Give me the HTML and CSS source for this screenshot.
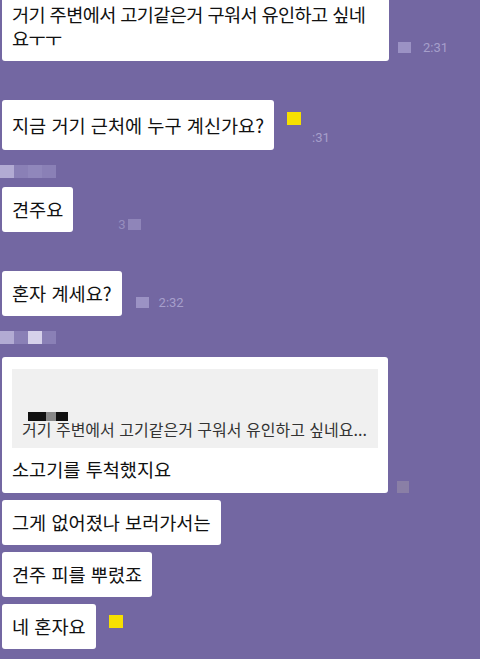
FILE: index.html
```html
<!DOCTYPE html>
<html lang="ko">
<head>
  <meta charset="UTF-8">
  <title>채팅</title>
  <link rel="stylesheet" href="styles.css">
</head>
<body>

  <div class="chat">

    <div class="row first">
      <div class="bubble wide">거기 주변에서 고기같은거 구워서 유인하고 싶네요ㅜㅜ</div>
      <div class="meta">
        <span class="blur-sq"></span>
        <span class="time">2:31</span>
      </div>
    </div>

    <div class="row gap-lg">
      <div class="bubble tall">지금 거기 근처에 누구 계신가요?</div>
      <div class="meta stack">
        <span class="dot-yellow"></span>
        <span class="time">:31</span>
      </div>
    </div>

    <div class="name-blur">
      <span class="px light"></span><span class="px"></span><span class="px mid"></span><span class="px"></span>
    </div>

    <div class="row gap-sm">
      <div class="bubble">견주요</div>
      <div class="meta faint">
        <span class="time">3</span>
        <span class="blur-sq"></span>
      </div>
    </div>

    <div class="row gap-lg">
      <div class="bubble">혼자 계세요?</div>
      <div class="meta wide-gap">
        <span class="blur-sq"></span>
        <span class="time">2:32</span>
      </div>
    </div>

    <div class="name-blur">
      <span class="px light"></span><span class="px"></span><span class="px white"></span><span class="px"></span>
    </div>

    <div class="row gap-md">
      <div class="bubble reply">
        <div class="quote">
          <span class="censor"></span>
          <span class="quote-text">거기 주변에서 고기같은거 구워서 유인하고 싶네요...</span>
        </div>
        <div class="reply-text">소고기를 투척했지요</div>
      </div>
      <div class="meta flush">
        <span class="grey-sq"></span>
      </div>
    </div>

    <div class="row gap-xs">
      <div class="bubble">그게 없어졌나 보러가서는</div>
    </div>

    <div class="row gap-xs">
      <div class="bubble">견주 피를 뿌렸죠</div>
    </div>

    <div class="row gap-xs">
      <div class="bubble">네 혼자요</div>
      <div class="meta top">
        <span class="dot-yellow"></span>
      </div>
    </div>

  </div>

</body>
</html>
```

FILE: styles.css
```css
body {
  margin: 0;
  padding: 0;
  background: #7367a2;
  font-family: "Noto Sans CJK KR", "Noto Sans", sans-serif;
  color: #111;
  overflow: hidden;
}

.chat {
  display: flex;
  flex-direction: column;
  padding-left: 2px;
}

.row {
  display: flex;
  align-items: flex-end;
  gap: 9px;
}

.row.first {
  margin-top: -8px;
}

.gap-lg {
  margin-top: 39px;
}

.gap-md {
  margin-top: 13px;
}

.gap-sm {
  margin-top: 9px;
}

.gap-xs {
  margin-top: 7px;
}

.bubble {
  background: #fff;
  border-radius: 3px;
  padding: 10px 10px 11px 10px;
  font-size: 18.6px;
  line-height: 24px;
  max-width: 366px;
}

.bubble.wide {
  width: 366px;
  padding-right: 11px;
  letter-spacing: -0.6px;
}

.bubble.tall {
  padding-top: 13px;
  padding-bottom: 13px;
}

.meta {
  display: flex;
  align-items: center;
  gap: 12px;
  padding-bottom: 6px;
}

.meta.stack {
  flex-direction: column;
  align-items: flex-start;
  gap: 5px;
  padding-bottom: 5px;
  margin-left: 4px;
}

.meta.stack .time {
  margin-left: 25px;
}

.meta.wide-gap {
  margin-left: 5px;
  gap: 10px;
}

.meta.top {
  align-self: flex-start;
  padding-top: 11px;
  margin-left: 4px;
}

.meta.faint {
  gap: 2px;
  margin-left: 36px;
  opacity: 0.7;
  padding-bottom: 0;
}

.meta.flush {
  padding-bottom: 0;
  margin-left: 0;
}

.time {
  font-family: Roboto, "Noto Sans", sans-serif;
  font-size: 13px;
  color: #a69fcb;
}

.blur-sq {
  width: 13px;
  height: 11px;
  background: #9b92c4;
}

.grey-sq {
  width: 12px;
  height: 12px;
  background: #8a7fa6;
}

.dot-yellow {
  width: 14px;
  height: 13px;
  background: #f6e000;
}

.name-blur {
  display: flex;
  margin-top: 15px;
  margin-left: -2px;
  height: 13px;
}

.px {
  width: 14px;
  height: 13px;
  background: #8a80b6;
}

.px.light {
  background: #b2abd3;
}

.px.mid {
  background: #9087bb;
}

.px.white {
  background: #d6d1ea;
}

.reply {
  width: 369px;
  padding: 12px 10px 12px 10px;
}

.quote {
  background: #f0f0f0;
  height: 79px;
  display: flex;
  flex-direction: column;
  justify-content: flex-end;
  padding: 0 10px 8px 10px;
  box-sizing: border-box;
  position: relative;
}

.quote-text {
  font-size: 16px;
  line-height: 22px;
  color: #333;
  white-space: nowrap;
}

.censor {
  position: absolute;
  left: 16px;
  top: 43px;
  width: 40px;
  height: 9px;
  background: linear-gradient(to right, #111 0 45%, #888 45% 70%, #111 70%);
}

.reply-text {
  margin-top: 9px;
}
```
